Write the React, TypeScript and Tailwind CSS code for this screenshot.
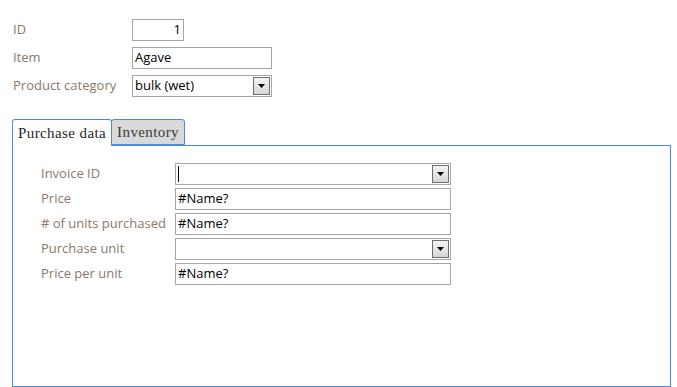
import React from "react";

const labelCls = "text-[13px] text-[#8a796b] leading-none pb-[2px]";
const inputBase =
  "h-[22px] border border-[#a6a6a6] bg-white text-[13px] text-black flex items-center px-[2px] pb-px leading-none";

function DropBtn() {
  return (
    <div className="ml-auto h-[18px] w-[17px] border border-[#6e6e6e] bg-gradient-to-b from-[#f4f4f4] to-[#d6d6d6] flex items-center justify-center mr-[-1px] mb-[-1px]">
      <svg width="7" height="4" viewBox="0 0 7 4">
        <path d="M0 0H7L3.5 4Z" fill="#000" />
      </svg>
    </div>
  );
}

export default function App() {
  return (
    <div
      className="w-[677px] h-[387px] bg-white relative overflow-hidden"
      style={{ fontFamily: '"Open Sans", "Noto Sans", sans-serif' }}
    >
      <div className="pt-[19px] pl-[13px] flex flex-col gap-[6px]">
        <div className="flex items-center">
          <div className={`${labelCls} w-[119px]`}>ID</div>
          <div className={`${inputBase} w-[52px] justify-end`}>1</div>
        </div>
        <div className="flex items-center">
          <div className={`${labelCls} w-[119px]`}>Item</div>
          <div className={`${inputBase} w-[140px]`}>Agave</div>
        </div>
        <div className="flex items-center">
          <div className={`${labelCls} w-[119px]`}>Product category</div>
          <div className={`${inputBase} w-[140px] pr-[2px]`}>
            <span>bulk (wet)</span>
            <DropBtn />
          </div>
        </div>
      </div>

      <div className="ml-[12px] mt-[22px]">
        <div
          className="flex items-end h-[26px] relative z-10"
          style={{ fontFamily: '"Liberation Serif", "DejaVu Serif", serif' }}
        >
          <div className="h-[27px] -mb-px border border-b-0 border-[#4f8ad8] rounded-t-[3px] bg-white px-[5px] pt-[1px] flex items-center text-[15px] tracking-[0.4px] text-[#262626]">
            Purchase data
          </div>
          <div className="h-[26px] border border-[#4f8ad8] rounded-t-[3px] bg-[#d9d9d9] px-[5px] pt-[1px] flex items-center text-[15px] tracking-[0.4px] text-[#3a3a3a] -ml-px">
            Inventory
          </div>
        </div>
        <div className="w-[659px] h-[242px] border border-[#4f8ad8] pt-[17px] pl-[28px] flex flex-col gap-[3px]">
          <div className="flex items-center">
            <div className={`${labelCls} w-[134px]`}>Invoice ID</div>
            <div className={`${inputBase} w-[276px] pr-[2px]`}>
              <span className="w-px h-[16px] bg-black" />
              <DropBtn />
            </div>
          </div>
          <div className="flex items-center">
            <div className={`${labelCls} w-[134px]`}>Price</div>
            <div className={`${inputBase} w-[276px]`}>#Name?</div>
          </div>
          <div className="flex items-center">
            <div className={`${labelCls} w-[134px]`}># of units purchased</div>
            <div className={`${inputBase} w-[276px]`}>#Name?</div>
          </div>
          <div className="flex items-center">
            <div className={`${labelCls} w-[134px]`}>Purchase unit</div>
            <div className={`${inputBase} w-[276px] pr-[2px]`}>
              <DropBtn />
            </div>
          </div>
          <div className="flex items-center">
            <div className={`${labelCls} w-[134px]`}>Price per unit</div>
            <div className={`${inputBase} w-[276px]`}>#Name?</div>
          </div>
        </div>
      </div>
    </div>
  );
}
